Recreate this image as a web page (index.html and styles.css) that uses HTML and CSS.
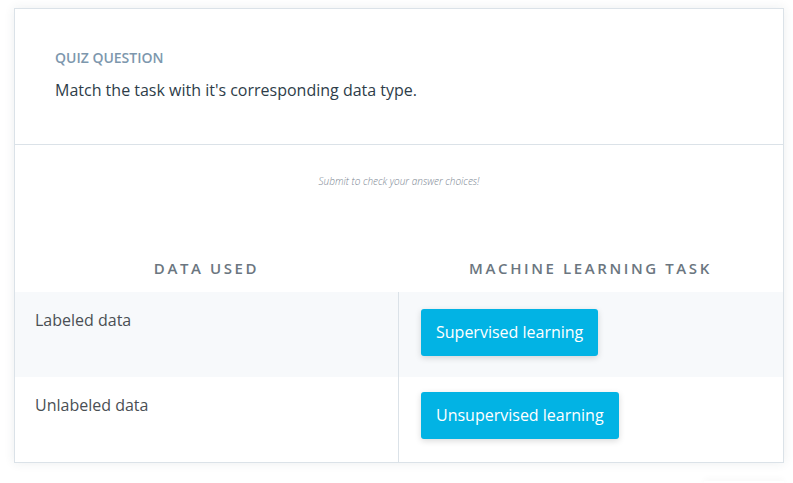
FILE: index.html
```html
<!DOCTYPE html>
<html>
<head>
<meta charset="utf-8">
<link rel="stylesheet" href="styles.css">
</head>
<body>
<div class="page">
  <div class="card">
    <div class="header">
      <div class="label">QUIZ QUESTION</div>
      <div class="question">Match the task with it's corresponding data type.</div>
    </div>
    <div class="body">
      <div class="hint">Submit to check your answer choices!</div>
      <div class="table">
        <div class="th">DATA USED</div>
        <div class="th th-right">MACHINE LEARNING TASK</div>
        <div class="cell left shaded">Labeled data</div>
        <div class="cell right shaded"><span class="btn">Supervised learning</span></div>
        <div class="cell left">Unlabeled data</div>
        <div class="cell right second"><span class="btn">Unsupervised learning</span></div>
      </div>
    </div>
  </div>
  <div class="ghost"></div>
</div>
</body>
</html>
```
FILE: styles.css
```css
html, body {
  margin: 0;
  padding: 0;
  background: #ffffff;
  font-family: "Open Sans", "Noto Sans", sans-serif;
}
.page {
  padding: 8px 0 0 14px;
}
.card {
  width: 768px;
  border: 1px solid #dbe2e8;
  background: #fff;
  box-shadow: 0 0 10px rgba(46, 61, 73, 0.09);
}
.header {
  padding: 39px 40px 42px 40px;
  border-bottom: 1px solid #dbe2e8;
}
.label {
  font-size: 14px;
  line-height: 20px;
  font-weight: 600;
  color: #7d97ad;
  margin-bottom: 10px;
}
.question {
  font-size: 16px;
  line-height: 24px;
  color: #2e3d49;
}
.body {
  padding-top: 29px;
}
.hint {
  text-align: center;
  font-size: 10px;
  line-height: 14px;
  font-style: italic;
  font-weight: 300;
  color: #7a8591;
  margin-bottom: 70px;
}
.table {
  display: grid;
  grid-template-columns: 383px 385px;
}
.th {
  text-align: center;
  font-size: 15px;
  line-height: 20px;
  font-weight: 600;
  letter-spacing: 2.6px;
  color: #6b7680;
  padding-bottom: 14px;
}
.cell {
  height: 85px;
  box-sizing: border-box;
}
.shaded {
  background: #f7f9fb;
}
.left {
  padding: 16px 20px;
  font-size: 16px;
  line-height: 24px;
  color: #4a4f54;
}
.right {
  border-left: 1px solid #dbe2e8;
  padding: 17px 22px 0 22px;
}
.right.second {
  padding-top: 15px;
}
.btn {
  display: inline-block;
  height: 47px;
  line-height: 47px;
  padding: 0 15px;
  background: #02b3e4;
  color: #fff;
  font-size: 16px;
  border-radius: 3px;
  box-shadow: 0 2px 6px rgba(0, 0, 0, 0.15);
}
.ghost {
  margin: 18px 0 0 690px;
  width: 80px;
  height: 4px;
  box-shadow: 0 -2px 6px rgba(0, 0, 0, 0.04);
}
```
